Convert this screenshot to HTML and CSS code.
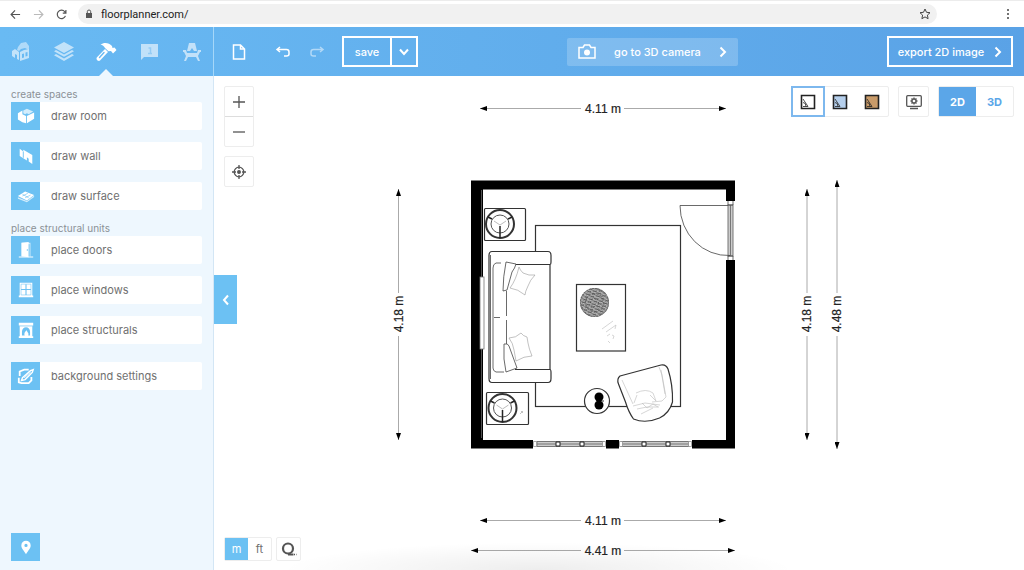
FILE: index.html
```html
<!DOCTYPE html>
<html lang="en">
<head>
  <meta charset="UTF-8" />
  <meta name="viewport" content="width=device-width, initial-scale=1.0"/>
  <title>Floorplanner</title>
  <link rel="stylesheet" href="styles.css">
</head>
<body>
  <div class="browser">
    <button class="nav-btn" aria-label="Back"><svg viewBox="0 0 12 12"><path d="M11 6H1.500M5.500 1.500L1.200 6l4.300 4.500"/></svg></button>
    <button class="nav-btn dim" aria-label="Forward"><svg viewBox="0 0 12 12"><path d="M1 6h9.500M6.500 1.500L10.800 6l-4.300 4.500"/></svg></button>
    <button class="nav-btn" aria-label="Reload"><svg viewBox="0 0 12 12"><path d="M10.300 7.500A4.600 4.600 0 1 1 9.600 3l1 1.200M10.800 1v3.400H7.400"/></svg></button>
    <div class="address">
      <svg class="lock" viewBox="0 0 8 10"><path d="M1 4h6v5H1z" fill="#555"/><path d="M2.300 4V2.700a1.700 1.700 0 0 1 3.400 0V4" fill="none" stroke="#555"/></svg>
      <input type="text" aria-label="Address" value="floorplanner.com/">
      <button class="star" aria-label="Bookmark"><svg viewBox="0 0 12 12"><path d="M6 1l1.500 3.300 3.500.4-2.600 2.400.7 3.600L6 8.900l-3.100 1.800.7-3.600L1 4.700l3.500-.4z"/></svg></button>
    </div>
    <button class="dots" aria-label="Menu"><svg viewBox="0 0 4 12"><circle cx="2" cy="2" r="1"/><circle cx="2" cy="6" r="1"/><circle cx="2" cy="10" r="1"/></svg></button>
  </div>

  <header class="appbar">
    <nav class="tabs">
      <button aria-label="Project">
        <svg viewBox="0 0 20 20"><path d="M7 5l3-4 5-1 3 4v4l-4-2-4 1-2 2-2-1z" opacity=".8"/><path d="M1 9l3-2 4 3v8l-2-1v-4l-2-1v4l-3-2z"/><path d="M9 10l4-2 5-1v9l-9 3zM11 12v4l2-.6v-4zM14.500 10.500v4l2-.6v-4z" fill-rule="evenodd"/></svg>
      </button>
      <button aria-label="Floors">
        <svg viewBox="0 0 20 20"><path d="M10 0l10 5.500L10 11 0 5.500z"/><path d="M0 9.200l2-1.100 8 4.400 8-4.400 2 1.100-10 5.600z"/><path d="M0 13.200l2-1.100 8 4.400 8-4.400 2 1.100L10 19z"/></svg>
      </button>
      <button class="active" aria-label="Build">
        <svg viewBox="0 0 20 20"><path d="M4.500 2.500C8 0 13 .5 16 4l.5 2 2-.5L20.500 8 17 11.500l-2-2.500-2.500.3L9 6C8 4 6.500 3 4.500 2.500z"/><path d="M9 7l3 3-8 8.500c-1.500 1.500-4.500-1-3.200-3z"/><path d="M3.500 15.500l4.500-5" stroke="#69baf3" stroke-width="1.400" stroke-linecap="round"/></svg>
      </button>
      <button aria-label="Info">
        <svg viewBox="0 0 20 20"><path d="M2 2h17v13H5l-3 3z"/><path d="M9.500 6h2v5.500M9 11.500h4" fill="none" stroke="#69baf3" stroke-width="1.500" opacity=".5"/></svg>
      </button>
      <button aria-label="Furniture">
        <svg viewBox="0 0 20 20"><path d="M7 1h6l2 8h-3l-2-3-2 3H5z"/><path d="M1 8h3l1 3h10l1-3h3v2h-1l-2 4 2 5h-2l-2-4H6l-2 4H2l2-5-2-4H1z"/></svg>
      </button>
    </nav>
    <div class="actions">
      <button class="tool" aria-label="New"><svg viewBox="0 0 14 16"><path d="M1.500 1h7L12.500 5v10h-11zM8.500 1v4h4"/></svg></button>
      <button class="tool undo" aria-label="Undo"><svg viewBox="0 0 16 14"><path d="M5 2L2 4.500 5 7M2 4.500h9.500c1.500 0 2.500 1 2.500 2.500v2c0 1.500-1 2-2.500 2H9"/></svg></button>
      <button class="tool redo" aria-label="Redo"><svg viewBox="0 0 16 14"><path d="M11 2l3 2.500L11 7M14 4.500H4.500C3 4.500 2 5.500 2 7v2c0 1.500 1 2 2.500 2H7"/></svg></button>
      <div class="save">
        <button>save</button>
        <button class="save-more" aria-label="Save options"><svg viewBox="0 0 10 8"><path d="M1 1.500l4 4.500 4-4.500"/></svg></button>
      </div>
    </div>
    <button class="camera">
      <svg class="cam" viewBox="0 0 18 15"><path d="M1 3.500h4L6.500 1h5L13 3.500h4V14H1z" fill="none" stroke="#fff" stroke-width="1.500"/><circle cx="9" cy="8.500" r="3" fill="#fff"/></svg>
      <span>go to 3D camera</span>
      <svg class="chev" viewBox="0 0 8 12"><path d="M1.500 1.500L6 6l-4.500 4.500"/></svg>
    </button>
    <button class="export">
      <span>export 2D image</span>
      <svg class="chev" viewBox="0 0 8 12"><path d="M1.500 1.500L6 6l-4.500 4.500"/></svg>
    </button>
  </header>

  <main class="workspace">
    <aside class="sidebar">
      <h2>create spaces</h2>
      <div class="group">
        <button class="item">
          <span class="icon"><svg viewBox="0 0 20 20"><path d="M1 7l5-3v4l4 2v8l-4-1-5-3z"/><path d="M11 10l8-4v7l-8 5z"/><path d="M7 4l4-2 7 3-5 3-2-1-2 1-2-1z" opacity=".7"/></svg></span>
          <span class="text">draw room</span>
        </button>
        <button class="item">
          <span class="icon"><svg viewBox="0 0 20 20"><path d="M3 2l4 3V3l10 6v10l-4-3v-3l-2-1.500V15L3 10z"/><path d="M7 5v7" stroke="#6cc1f3"/></svg></span>
          <span class="text">draw wall</span>
        </button>
        <button class="item">
          <span class="icon"><svg viewBox="0 0 20 20"><path d="M1 10l8-5 10 4-8 6z"/><path d="M1 11.500v1.500l10 4 8-6v-1.500l-8 6z" opacity=".7"/><path d="M6 10l6-3M9 12l6-3M6 8l7 4" stroke="#6cc1f3" stroke-width=".7"/></svg></span>
          <span class="text">draw surface</span>
        </button>
      </div>
      <h2>place structural units</h2>
      <div class="group">
        <button class="item">
          <span class="icon"><svg viewBox="0 0 20 20"><path d="M5 2h10v15h3v1.500H2V17h3z" opacity=".65"/><path d="M5 2l8-1v17l-8-1z"/><path d="M13.500 3.500V17" stroke="#6cc1f3"/><circle cx="11.500" cy="10" r=".8" fill="#6cc1f3"/></svg></span>
          <span class="text">place doors</span>
        </button>
        <button class="item">
          <span class="icon"><svg viewBox="0 0 20 20"><path d="M3 2h14v14h1v2H2v-2h1z"/><path d="M10 3.500v12M4.500 9.500h11" stroke="#6cc1f3" stroke-width="1.200"/><path d="M4.500 3.500h11v12h-11z" fill="none" stroke="#6cc1f3" stroke-width=".6"/></svg></span>
          <span class="text">place windows</span>
        </button>
        <button class="item">
          <span class="icon"><svg viewBox="0 0 20 20"><path d="M2 2h16v3h-1v12h1v2H2v-2h1V5H2z"/><path d="M5.500 16v-4a4.500 5 0 0 1 9 0v4h-2c1-3-1-3-2-6-1 2-3 3-2 6z" fill="#6cc1f3"/><path d="M3 5.500h14" stroke="#6cc1f3" stroke-width=".8"/></svg></span>
          <span class="text">place structurals</span>
        </button>
      </div>
      <button class="item background">
        <span class="icon"><svg viewBox="0 0 20 20"><path d="M13 3H8L3 5v5M2 12v5l3 1h8l3-3v-4" fill="none" stroke="#fff" stroke-width="2"/><path d="M6 12l9-8 3-1-1 3-8 8-4 1z" fill="none" stroke="#fff" stroke-width="1.600"/><path d="M8 12l7-6" stroke="#fff"/></svg></span>
        <span class="text">background settings</span>
      </button>
      <button class="icon pin" aria-label="Location"><svg viewBox="0 0 20 20"><path fill-rule="evenodd" d="M10 3a5.200 5.200 0 0 1 5.200 5.200C15.200 12 12 14 10 18c-2-4-5.200-6-5.200-9.800A5.200 5.200 0 0 1 10 3zm0 3.500a1.800 1.800 0 1 0 0 3.600 1.800 1.800 0 0 0 0-3.600z"/></svg></button>
    </aside>

    <section class="canvas">
      <svg class="plan" viewBox="214 76 810 494" role="img" aria-label="Floor plan">
        <defs>
          <marker id="arrow" viewBox="0 0 7 5" refX="7" refY="2.500" markerWidth="7" markerHeight="5" markerUnits="userSpaceOnUse" orient="auto"><path d="M0 0l7 2.500L0 5z"/></marker>
          <pattern id="leaf" width="5" height="3" patternUnits="userSpaceOnUse" patternTransform="rotate(27)"><path d="M0 1l2 1 2-2M1 3l1-2 3 1" fill="none" stroke="#444" stroke-width=".7"/></pattern>
          <g id="lamp">
            <circle r="14" fill="#fff" stroke="#333" stroke-width="2"/>
            <circle r="9" fill="none" stroke="#555"/>
            <path d="M0 2v12M-8-5l-4-2M8-5l4-2" stroke="#222" stroke-width="1.500"/>
            <path d="M0 1l-6-4M0 1l6-4" stroke="#bbb"/>
          </g>
        </defs>

        <!-- walls -->
        <path d="M471 180.500h264v268H471zM483 189.500v250.500h243V189.500z" fill-rule="evenodd"/>
        <path d="M481.500 190v87M481.500 349v89" stroke="#888" stroke-width=".6"/>
        <rect x="480" y="277" width="4" height="72" fill="#fff" stroke="#777" stroke-width=".8"/>

        <!-- door -->
        <rect x="725" y="201" width="11" height="59" fill="#fff"/>
        <rect x="728" y="205" width="5" height="51" fill="#ccc" stroke="#777"/>
        <path d="M730.500 205v51" stroke="#777"/>
        <path d="M728 205.500h-48a48 50 0 0 0 50 50" class="line thin"/>
        <path d="M728 201v4h5v-4M728 260v-4h5v4" class="line thin"/>

        <!-- windows -->
        <rect x="533" y="439" width="73" height="10" fill="#fff"/>
        <rect x="619" y="439" width="73" height="10" fill="#fff"/>
        <rect x="537" y="441.500" width="67" height="5" fill="#ccc" stroke="#777"/>
        <rect x="621" y="441.500" width="68" height="5" fill="#ccc" stroke="#777"/>
        <path d="M537 444h67M621 444h68" stroke="#777"/>
        <path d="M533.500 441.500h3v5h-3zM602.500 441.500h3v5h-3zM619.500 441.500h3v5h-3zM688.500 441.500h3v5h-3z" fill="#fff" stroke="#888" stroke-width=".7"/>
        <path d="M556 442h4v4h-4zM580 442h4v4h-4zM642 442h4v4h-4zM666 442h4v4h-4z" fill="#fff" stroke="#222"/>

        <!-- rug -->
        <rect x="535.500" y="225.500" width="145" height="181" class="line"/>

        <!-- side tables -->
        <rect x="484.500" y="208.500" width="41" height="32" rx="1" class="solid"/>
        <use href="#lamp" x="500" y="224"/>
        <rect x="486.500" y="392.500" width="42" height="32" rx="1" class="solid"/>
        <use href="#lamp" x="502.500" y="408"/>
        <path d="M520 414l3-3M521 411l2 2" class="faint"/>

        <!-- sofa -->
        <path d="M492 251.500h56q3 0 3 4v6q0 3-1 3v105q1 0 1 3v6q0 4-3 4h-56q-3 0-3-4V255.500q0-4 3-4z" class="solid"/>
        <path d="M490.500 255v124" class="line thin"/>
        <path d="M515 264.500h35M515 369.500h35" class="line"/>
        <path d="M501 263h-5q-3 1-3 5v100q0 3 3 4h8M494 317.500h6M506.500 291v25M506.500 320v25" class="line thin"/>
        <path d="M506 262l10 2q-1 4-4 8l-5 18-4 1q0-14 3-29zM504 344q4-1 5 2l8 22-11 4q-3-12-2-28z" class="solid thin"/>
        <path d="M519 267q1 3 4 6 6 3 12 2-5 5-7 11-3 6-3 9-7-6-15-7 6-8 9-21zM521 333q-5 5-12 5 4 5 5 12l2 11q8-5 16-5-3-7-4-13l-1-6q-4-1-6-4z" class="faint"/>

        <!-- coffee table -->
        <rect x="576.500" y="284.500" width="49" height="66.500" class="solid"/>
        <circle cx="594.500" cy="302.500" r="14.500" fill="#bbb"/>
        <circle cx="594.500" cy="302.500" r="14.500" fill="url(#leaf)"/>
        <circle cx="594.500" cy="302.500" r="14" fill="none" stroke="#666" stroke-dasharray="2 1"/>
        <circle cx="594.500" cy="302.500" r="9" fill="none" stroke="#555" stroke-dasharray="2 2"/>
        <circle cx="594.500" cy="302.500" r="4" fill="none" stroke="#444" stroke-dasharray="1 2"/>
        <path d="M602 329l11-8M606 332l10-7-1 4M607 336l3-2M608 341l2 2M612 335l2 1-1 3" class="faint pale"/>

        <!-- round table -->
        <circle cx="597" cy="401" r="12.500" class="solid"/>
        <circle cx="599" cy="397" r="4.500"/><circle cx="599" cy="405" r="4.500"/><circle cx="603" cy="401" r="1" fill="#777"/>

        <!-- armchair -->
        <path d="M620 376l41-11q5-1 7 4 5 16 4.500 33-3 11-13 16-14 6-26 1-5-7-8-17l-7-18q-2-5 1.500-8z" class="solid"/>
        <path d="M622 380l11 24M659 367l3 8 4 22-4 4-10 1M661 370l4 24M636 393q10-5 17 0l3 8-6-6M637 395l-3 8M633 406l12-3 15 2M637 409l10-2 12 0M641 414l12-6M642 403l5 5 6-4 5 3" class="faint pale"/>

        <!-- dimensions -->
        <g class="dims">
          <path d="M581 108.500H480"/><path d="M624 108.500h102"/>
          <path d="M581 520.500H480"/><path d="M624 520.500h102"/>
          <path d="M581 550.500H471"/><path d="M624 550.500h111"/>
          <path d="M398.500 293V189"/><path d="M398.500 336v104"/>
          <path d="M807 293V189"/><path d="M807 336v104"/>
          <path d="M837 293V180"/><path d="M837 336v113"/>
        </g>
        <g class="labels">
          <text x="603" y="113">4.11 m</text>
          <text x="603" y="525">4.11 m</text>
          <text x="603" y="555">4.41 m</text>
          <text transform="translate(403 314) rotate(-90)">4.18 m</text>
          <text transform="translate(811 314) rotate(-90)">4.18 m</text>
          <text transform="translate(841 314) rotate(-90)">4.48 m</text>
        </g>
      </svg>

      <div class="zoom-tools">
        <div class="panel">
          <button aria-label="Zoom in"><svg viewBox="0 0 14 14"><path d="M7 1v12M1 7h12"/></svg></button>
          <button aria-label="Zoom out"><svg viewBox="0 0 14 14"><path d="M1 7h12"/></svg></button>
        </div>
        <div class="panel">
          <button aria-label="Center plan"><svg viewBox="0 0 14 14"><circle cx="7" cy="7" r="4.800"/><circle cx="7" cy="7" r="1.300" fill="#555"/><path d="M7 0v4M7 10v4M0 7h4M10 7h4"/></svg></button>
        </div>
      </div>

      <button class="collapse" aria-label="Collapse sidebar"><svg viewBox="0 0 8 12"><path d="M6 1.500L2 6l4 4.500"/></svg></button>

      <div class="view-tools">
        <div class="panel styles">
          <button class="selected" aria-label="Line style"><svg viewBox="0 0 16 16"><path d="M1.500 1.500h13v13h-13z" fill="#fff"/><path d="M3 5l5 7.500H3M3 8.500q3 0 3 4" class="sketch"/></svg></button>
          <button aria-label="Blue style"><svg viewBox="0 0 16 16"><path d="M1.500 1.500h13v13h-13z" fill="#b5cfec"/><path d="M3 5l5 7.500H3M3 8.500q3 0 3 4" class="sketch"/></svg></button>
          <button aria-label="Color style"><svg viewBox="0 0 16 16"><path d="M1.500 1.500h13v13h-13z" fill="#c99b69"/><path d="M3 5l5 7.500H3M3 8.500q3 0 3 4" class="sketch"/></svg></button>
        </div>
        <div class="panel">
          <button aria-label="Display settings"><svg viewBox="0 0 16 16"><rect x=".700" y="1.700" width="14.600" height="10.600" rx="1"/><circle cx="8" cy="7" r="2"/><path d="M8 3.500V5M8 9v1.500M4.500 7H6M10 7h1.500M5.500 4.500l1 1M9.500 8.500l1 1M5.500 9.500l1-1M9.500 5.500l1-1M4 14.500h8"/></svg></button>
        </div>
        <div class="panel modes">
          <button class="on">2D</button>
          <button>3D</button>
        </div>
      </div>

      <div class="unit-tools">
        <div class="panel">
          <button class="on">m</button>
          <button>ft</button>
        </div>
        <div class="panel">
          <button aria-label="Measure"><svg viewBox="0 0 16 16"><circle cx="7" cy="7.500" r="5" stroke-width="2.200"/><path d="M7 13.500h5.500" stroke-width="2"/><path d="M13 13.500h2.500" stroke-dasharray="1 1"/></svg></button>
        </div>
      </div>
    </section>
  </main>
</body>
</html>
```
FILE: styles.css
```css
* {
  box-sizing: border-box;
}

body {
  margin: 0;
  height: 100vh;
  display: flex;
  flex-direction: column;
  font-family: Inter, "Liberation Sans", sans-serif;
  font-size: 11px;
  color: #707070;
  background: #fff;
  overflow: hidden;
}

button {
  display: flex;
  align-items: center;
  justify-content: center;
  padding: 0;
  border: none;
  background: none;
  font: inherit;
  color: inherit;
  cursor: pointer;
}

/* browser bar */
.browser {
  display: flex;
  align-items: center;
  flex: none;
  height: 27px;
  padding: 0 9px;
  border-top: 1px solid #ececec;
}

.nav-btn {
  width: 23px;
  height: 20px;
  margin-left: -5px;
  margin-right: 5px;
}

.nav-btn svg {
  width: 11px;
  height: 11px;
  fill: none;
  stroke: #555;
  stroke-width: 1.3;
}

.nav-btn.dim {
  opacity: 0.4;
}

.address {
  display: flex;
  align-items: center;
  flex: 1;
  height: 20px;
  padding: 0 6px 0 7px;
  border-radius: 10px;
  background: #f1f1f1;
}

.lock {
  width: 8px;
  height: 10px;
}

.address input {
  flex: 1;
  min-width: 0;
  margin-left: 8px;
  padding: 0;
  border: none;
  outline: none;
  background: none;
  font-family: Roboto, sans-serif;
  font-size: 11px;
  color: #222;
}

.star svg {
  width: 12px;
  height: 12px;
  fill: none;
  stroke: #444;
}

.dots {
  width: 78px;
  justify-content: flex-end;
  padding-right: 5px;
}

.dots svg {
  width: 4px;
  height: 12px;
  fill: #444;
}

/* app bar */
.appbar {
  display: flex;
  align-items: center;
  flex: none;
  height: 49px;
  padding-right: 11px;
  background: linear-gradient(90deg, #69baf3, #5aa2e6);
  color: #fff;
  font-weight: 500;
}

.tabs {
  display: grid;
  grid-template-columns: repeat(5, 1fr);
  width: 214px;
  height: 100%;
  border-right: 1px solid #a5d7f9;
}

.tabs button {
  position: relative;
}

.tabs svg {
  width: 20px;
  height: 20px;
  fill: #fff;
  opacity: 0.6;
  overflow: visible;
}

.tabs .active svg {
  opacity: 1;
}

.tabs .active::after {
  content: "";
  position: absolute;
  bottom: 0;
  left: 50%;
  margin-left: -7px;
  border: 7px solid transparent;
  border-top: none;
  border-bottom-color: #eef7fe;
}

.actions {
  display: flex;
  align-items: center;
  padding-left: 15px;
}

.tool {
  width: 20px;
  height: 30px;
}

.tool svg {
  width: 16px;
  height: 16px;
  fill: none;
  stroke: #fff;
  stroke-width: 1.5;
}

.undo {
  margin-left: 24px;
}

.redo {
  margin-left: 14px;
  opacity: 0.5;
}

.save {
  display: flex;
  height: 31px;
  margin-left: 15px;
  border: 2px solid #fff;
}

.save button {
  width: 46px;
}

.save .save-more {
  width: 26px;
  border-left: 2px solid #fff;
}

.save svg {
  width: 10px;
  height: 8px;
}

.save svg,
.chev,
.collapse svg {
  fill: none;
  stroke: #fff;
  stroke-width: 2;
}

.chev {
  width: 8px;
  height: 12px;
}

.camera {
  width: 171px;
  height: 28px;
  margin: 0 auto;
  padding: 0 11px;
  justify-content: space-between;
  background: rgba(255, 255, 255, 0.2);
  border-radius: 2px;
}

.cam {
  width: 18px;
  height: 15px;
}

.export {
  gap: 10px;
  width: 126px;
  height: 31px;
  border: 2px solid #fff;
  white-space: nowrap;
}

/* sidebar */
.workspace {
  display: flex;
  flex: 1;
  min-height: 0;
}

.sidebar {
  display: flex;
  flex-direction: column;
  flex: none;
  width: 214px;
  padding: 10px 11px 9px;
  background: #eef7fe;
  border-right: 1px solid #d3e6f5;
}

.sidebar h2 {
  margin: 0;
  font-size: 10px;
  font-weight: 400;
  line-height: 16px;
  color: #8b9196;
}

.group {
  display: grid;
  gap: 12px;
}

.group + h2 {
  margin-top: 10px;
}

.item {
  width: 100%;
  height: 28px;
  justify-content: flex-start;
  border-radius: 2px;
  background: #fff;
}

.background {
  margin-top: 18px;
}

.icon {
  display: flex;
  align-items: center;
  justify-content: center;
  flex: none;
  width: 29px;
  height: 28px;
  background: #6cc1f3;
}

.icon svg {
  width: 18px;
  height: 18px;
  fill: #fff;
}

.text {
  padding-left: 11px;
}

.pin {
  margin-top: auto;
}

/* canvas */
.canvas {
  position: relative;
  flex: 1;
  min-width: 0;
}

.canvas::after {
  content: "";
  position: absolute;
  left: 8%;
  right: 28%;
  bottom: 0;
  height: 28px;
  background: radial-gradient(ellipse at bottom, rgba(0, 0, 0, 0.07), transparent 70%);
  pointer-events: none;
}

.plan {
  display: block;
  width: 100%;
  height: 100%;
}

.line,
.solid,
.faint {
  fill: none;
  stroke: #333;
  stroke-width: 1.2;
}

.solid {
  fill: #fff;
}

.thin {
  stroke: #444;
  stroke-width: 0.8;
}

.faint {
  stroke: #999;
  stroke-width: 0.6;
}

.pale {
  stroke: #bbb;
}

.dims path {
  stroke: #aaa;
  stroke-width: 1;
  marker-end: url(#arrow);
}

.dims path,
#arrow path {
  fill: #000;
}

.labels {
  font-family: "Liberation Sans", sans-serif;
  font-size: 12px;
  fill: #222;
  stroke: #222;
  stroke-width: 0.2;
  text-anchor: middle;
}

.panel {
  display: flex;
  background: #fff;
  border: 1px solid #ededed;
  border-radius: 2px;
}

.panel svg {
  width: 16px;
  height: 16px;
  fill: none;
  stroke: #555;
  stroke-width: 1.3;
}

.zoom-tools {
  position: absolute;
  top: 10px;
  left: 10px;
  display: grid;
  gap: 9px;
}

.zoom-tools .panel {
  flex-direction: column;
}

.zoom-tools button {
  width: 28px;
  height: 29px;
}

.zoom-tools button + button {
  height: 30px;
  border-top: 1px solid #ddd;
}

.zoom-tools svg {
  width: 14px;
  height: 14px;
}

.collapse {
  position: absolute;
  top: 199px;
  left: 0;
  width: 23px;
  height: 49px;
  background: #6cc1f3;
}

.collapse svg {
  width: 8px;
  height: 12px;
}

.view-tools {
  position: absolute;
  top: 10px;
  right: 10px;
  display: flex;
  gap: 9px;
}

.view-tools button {
  width: 29px;
  height: 29px;
}

.view-tools .styles button {
  width: 32px;
}

.view-tools .styles svg {
  stroke: #222;
  stroke-width: 1.6;
}

.view-tools .styles .sketch {
  stroke-width: 0.8;
}

.view-tools .styles .selected {
  outline: 2px solid #7db8ee;
  outline-offset: -1px;
}

.view-tools .modes button {
  width: 37px;
  font-weight: 700;
  color: #5ba6e8;
}

.view-tools .modes .on {
  color: #fff;
  background: #5ba6e8;
}

.unit-tools {
  position: absolute;
  left: 10px;
  bottom: 9px;
  display: flex;
  gap: 4px;
}

.unit-tools button {
  width: 23px;
  height: 22px;
}

.unit-tools .on {
  color: #fff;
  background: #6cc1f3;
}
```
